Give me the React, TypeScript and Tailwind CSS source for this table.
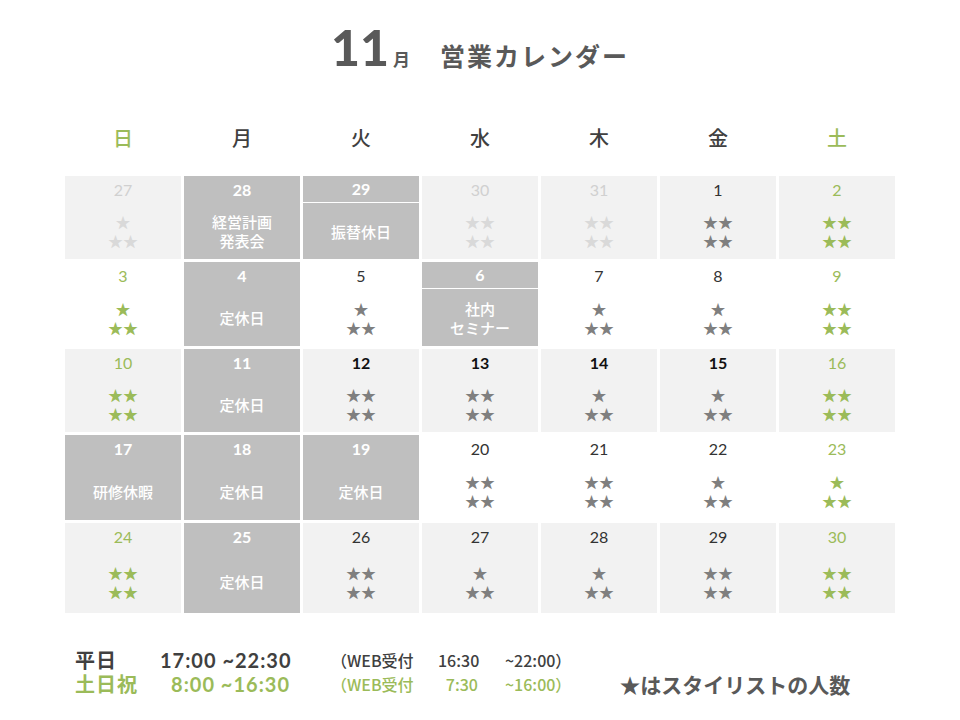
import React from 'react';

type Kind = 'past' | 'normal' | 'bold' | 'green' | 'off';

interface Day {
  d: number;
  kind: Kind;
  stars?: string[];
  text?: string[];
  line?: boolean;
}

const S1 = ['★', '★★'];
const S2 = ['★★', '★★'];

// 5 weeks, Sunday first
const weeks: Day[][] = [
  [
    { d: 27, kind: 'past', stars: S1 },
    { d: 28, kind: 'off', text: ['経営計画', '発表会'] },
    { d: 29, kind: 'off', text: ['振替休日'], line: true },
    { d: 30, kind: 'past', stars: S2 },
    { d: 31, kind: 'past', stars: S2 },
    { d: 1, kind: 'normal', stars: S2 },
    { d: 2, kind: 'green', stars: S2 },
  ],
  [
    { d: 3, kind: 'green', stars: S1 },
    { d: 4, kind: 'off', text: ['定休日'] },
    { d: 5, kind: 'normal', stars: S1 },
    { d: 6, kind: 'off', text: ['社内', 'セミナー'], line: true },
    { d: 7, kind: 'normal', stars: S1 },
    { d: 8, kind: 'normal', stars: S1 },
    { d: 9, kind: 'green', stars: S2 },
  ],
  [
    { d: 10, kind: 'green', stars: S2 },
    { d: 11, kind: 'off', text: ['定休日'] },
    { d: 12, kind: 'bold', stars: S2 },
    { d: 13, kind: 'bold', stars: S2 },
    { d: 14, kind: 'bold', stars: S1 },
    { d: 15, kind: 'bold', stars: S1 },
    { d: 16, kind: 'green', stars: S2 },
  ],
  [
    { d: 17, kind: 'off', text: ['研修休暇'] },
    { d: 18, kind: 'off', text: ['定休日'] },
    { d: 19, kind: 'off', text: ['定休日'] },
    { d: 20, kind: 'normal', stars: S2 },
    { d: 21, kind: 'normal', stars: S2 },
    { d: 22, kind: 'normal', stars: S1 },
    { d: 23, kind: 'green', stars: S1 },
  ],
  [
    { d: 24, kind: 'green', stars: S2 },
    { d: 25, kind: 'off', text: ['定休日'] },
    { d: 26, kind: 'normal', stars: S2 },
    { d: 27, kind: 'normal', stars: S1 },
    { d: 28, kind: 'normal', stars: S1 },
    { d: 29, kind: 'normal', stars: S2 },
    { d: 30, kind: 'green', stars: S2 },
  ],
];

const weekdays = ['日', '月', '火', '水', '木', '金', '土'];

const numClass: Record<Kind, string> = {
  past: 'text-[#d0d0d0]',
  normal: 'text-[#333333]',
  bold: 'text-[#111111] font-bold',
  green: 'text-[#9bbb59]',
  off: 'text-white font-bold',
};

const starClass: Record<Kind, string> = {
  past: 'text-[#d9d9d9]',
  normal: 'text-[#7f7f7f]',
  bold: 'text-[#7f7f7f]',
  green: 'text-[#9bbb59]',
  off: 'text-white',
};

function DayCell({ day, shaded }: { day: Day; shaded: boolean }) {
  const bg = day.kind === 'off' ? 'bg-[#bfbfbf]' : shaded ? 'bg-[#f2f2f2]' : 'bg-white';
  return (
    <div className={`flex flex-col ${bg}`}>
      <div
        className={`h-[27px] flex items-center justify-center text-[16px] font-['Lato',sans-serif] ${numClass[day.kind]} ${
          day.line ? 'border-b border-white' : ''
        }`}
      >
        {day.d}
      </div>
      <div className="flex-1 flex flex-col items-center justify-center">
        {day.stars &&
          day.stars.map((s, i) => (
            <span key={i} className={`text-[15px] leading-[19px] ${starClass[day.kind]}`}>
              {s}
            </span>
          ))}
        {day.text &&
          day.text.map((t, i) => (
            <span key={i} className="text-[15px] leading-[19px] text-white font-medium">
              {t}
            </span>
          ))}
      </div>
    </div>
  );
}

export default function App() {
  return (
    <div className="w-[960px] h-[720px] bg-white font-['Noto_Sans_CJK_JP',sans-serif] text-[#404040] overflow-hidden">
      {/* title */}
      <div className="h-[120px] pt-[22px] flex justify-center items-baseline text-[#595959]">
        <span className="text-[50px] leading-none font-black font-['Lato',sans-serif]">11</span>
        <span className="text-[17px] font-bold ml-[4px]">月</span>
        <span className="text-[25px] font-bold ml-[30px] tracking-[2px]">営業カレンダー</span>
      </div>

      {/* weekday labels */}
      <div className="ml-[65px] w-[830px] grid grid-cols-7 gap-x-[3px] h-[36px]">
        {weekdays.map((w, i) => (
          <div
            key={w}
            className={`flex items-center justify-center text-[20px] font-medium ${
              i === 0 || i === 6 ? 'text-[#9bbb59]' : 'text-[#404040]'
            }`}
          >
            {w}
          </div>
        ))}
      </div>

      {/* calendar */}
      <div className="ml-[65px] mt-[20px] w-[830px] grid grid-cols-7 gap-[3px] grid-rows-[83px_84px_83px_85px_90px]">
        {weeks.map((week, r) =>
          week.map((day, c) => <DayCell key={`${r}-${c}`} day={day} shaded={r % 2 === 0} />)
        )}
      </div>

      {/* hours */}
      <div className="ml-[75px] mt-[35px] w-[820px] flex flex-col whitespace-nowrap">
        <div className="h-[24px] flex items-center text-[#404040]">
          <span className="shrink-0 w-[85px] text-[20px] leading-[24px] font-bold tracking-[1px]">平日</span>
          <span className="shrink-0 w-[130px] text-right text-[20px] leading-[24px] font-bold tracking-[1px] font-['Lato',sans-serif]">17:00 ~22:30</span>
          <span className="shrink-0 ml-[41px] w-[107px] text-[16px] leading-[24px] font-medium">（WEB受付</span>
          <span className="shrink-0 w-[40px] text-right text-[16px] leading-[24px] font-medium">16:30</span>
          <span className="shrink-0 ml-[27px] text-[16px] leading-[24px] font-medium">~22:00）</span>
        </div>
        <div className="h-[24px] flex items-center text-[#9bbb59]">
          <span className="shrink-0 w-[85px] text-[20px] leading-[24px] font-bold tracking-[1px]">土日祝</span>
          <span className="shrink-0 w-[130px] text-right text-[20px] leading-[24px] font-bold tracking-[1px] font-['Lato',sans-serif]">8:00 ~16:30</span>
          <span className="shrink-0 ml-[41px] w-[107px] text-[16px] leading-[24px] font-medium">（WEB受付</span>
          <span className="shrink-0 w-[40px] text-right text-[16px] leading-[24px] font-medium">7:30</span>
          <span className="shrink-0 ml-[27px] text-[16px] leading-[24px] font-medium">~16:00）</span>
          <span className="shrink-0 ml-[48px] text-[21px] leading-[24px] font-bold text-[#595959]">★はスタイリストの人数</span>
        </div>
      </div>
    </div>
  );
}
